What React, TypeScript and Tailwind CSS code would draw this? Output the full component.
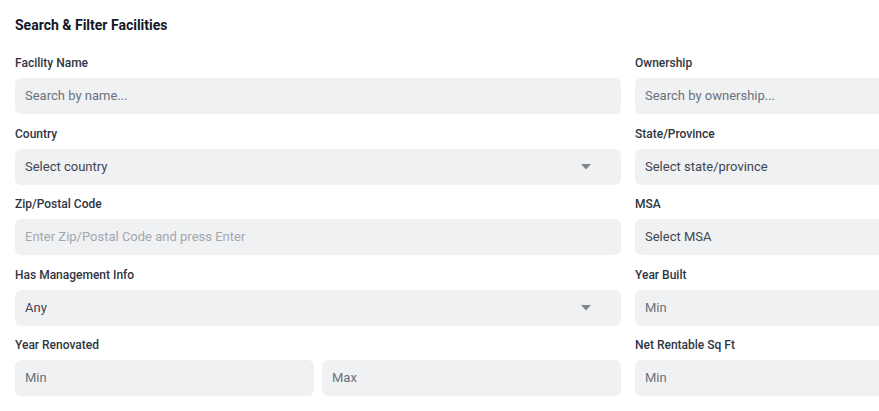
import React from 'react';

const Caret: React.FC = () => (
  <svg width="10" height="6" viewBox="0 0 10 6" className="shrink-0">
    <path d="M0 0 L10 0 L5 5.5 Z" fill="#7b8691" />
  </svg>
);

const Label: React.FC<{ children: React.ReactNode }> = ({ children }) => (
  <label className="block text-[12px] leading-4 font-medium text-[#2f3642] mb-[7px]">{children}</label>
);

const TextInput: React.FC<{ placeholder: string; light?: boolean }> = ({ placeholder, light }) => (
  <div className="h-9 rounded-md bg-[#f0f1f3] flex items-center px-[10px]">
    <span className={`text-[13px] ${light ? 'text-[#a3a7ae]' : 'text-[#6b717b]'}`}>{placeholder}</span>
  </div>
);

const SelectInput: React.FC<{ value: string; caret?: boolean }> = ({ value, caret }) => (
  <div className="h-9 rounded-md bg-[#f0f1f3] flex items-center justify-between pl-[10px] pr-[30px]">
    <span className="text-[13px] text-[#3f4652]">{value}</span>
    {caret && <Caret />}
  </div>
);

// the right-hand column runs past the window, so its Max half is never seen
const Range: React.FC<{ minOnly?: boolean }> = ({ minOnly }) => (
  <div className="grid grid-cols-2 gap-2">
    <TextInput placeholder="Min" />
    {minOnly ? <div className="h-9 rounded-md bg-[#f0f1f3]" /> : <TextInput placeholder="Max" />}
  </div>
);

const App: React.FC = () => {
  return (
    <div className="w-[879px] h-[411px] overflow-hidden bg-white pt-[15px] pl-[15px] font-['Roboto',sans-serif]">
      <h2 className="text-[14px] leading-5 font-bold text-[#111827] mb-5">Search &amp; Filter Facilities</h2>
      <div className="grid grid-cols-[606px_606px] gap-x-[14px] gap-y-[11.5px]">
        <div>
          <Label>Facility Name</Label>
          <TextInput placeholder="Search by name..." />
        </div>
        <div>
          <Label>Ownership</Label>
          <TextInput placeholder="Search by ownership..." />
        </div>
        <div>
          <Label>Country</Label>
          <SelectInput value="Select country" caret />
        </div>
        <div>
          <Label>State/Province</Label>
          <SelectInput value="Select state/province" caret />
        </div>
        <div>
          <Label>Zip/Postal Code</Label>
          <TextInput placeholder="Enter Zip/Postal Code and press Enter" light />
        </div>
        <div>
          <Label>MSA</Label>
          <SelectInput value="Select MSA" caret />
        </div>
        <div>
          <Label>Has Management Info</Label>
          <SelectInput value="Any" caret />
        </div>
        <div>
          <Label>Year Built</Label>
          <Range minOnly />
        </div>
        <div>
          <Label>Year Renovated</Label>
          <Range />
        </div>
        <div>
          <Label>Net Rentable Sq Ft</Label>
          <Range minOnly />
        </div>
      </div>
    </div>
  );
};

export default App;
